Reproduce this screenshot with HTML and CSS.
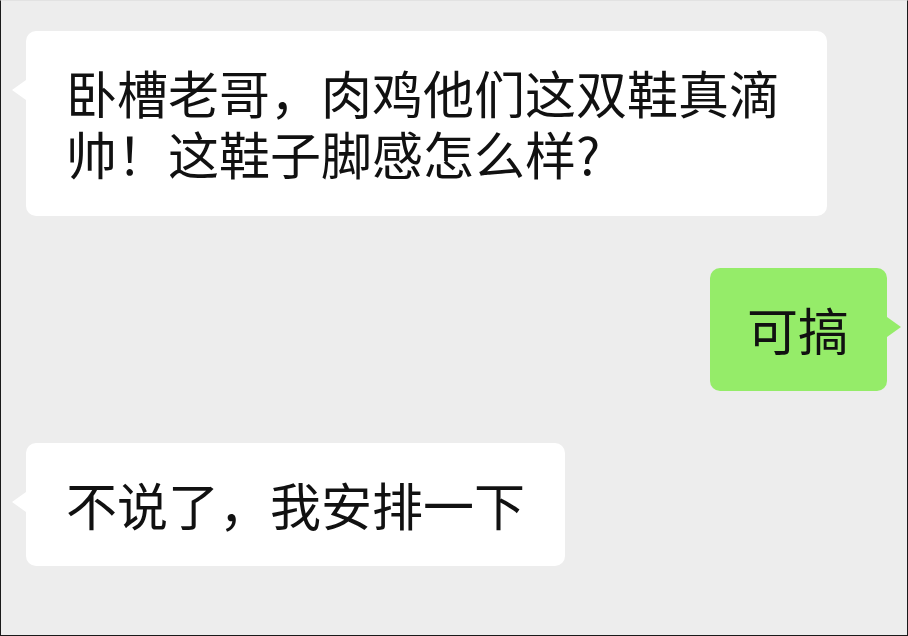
FILE: index.html
```html
<!DOCTYPE html>
<html lang="zh-CN">

<head>
    <meta charset="UTF-8">
    <meta name="viewport" content="width=device-width, initial-scale=1.0">
    <title>聊天记录</title>
    <link rel="stylesheet" href="styles.css">
</head>

<body>
    <div class="chat">
        <div class="row row_left">
            <div class="bubble bubble_left bubble_wide">卧槽老哥，肉鸡他们这双鞋真滴帅！这鞋子脚感怎么样?</div>
        </div>
        <div class="row row_right">
            <div class="bubble bubble_right">可搞</div>
        </div>
        <div class="row row_left">
            <div class="bubble bubble_left">不说了，我安排一下</div>
        </div>
    </div>
</body>

</html>
```

FILE: styles.css
```css
* {
    margin: 0;
    padding: 0;
    box-sizing: border-box;
}

body {
    width: 908px;
    height: 636px;
    background-color: #ededed;
    font-family: "Noto Sans CJK SC", "Noto Sans", sans-serif;
    overflow: hidden;
}

.chat {
    width: 908px;
    height: 636px;
    border-left: 1px solid #1a1a1a;
    border-right: 1px solid #1a1a1a;
    border-bottom: 1px solid #1a1a1a;
    border-top: 1px solid #e2e2e2;
    padding: 30px 20px 0 25px;
    display: flex;
    flex-direction: column;
    gap: 52px;
}

.row {
    display: flex;
}

.row_left {
    justify-content: flex-start;
}

.row_right {
    justify-content: flex-end;
}

.bubble {
    position: relative;
    font-size: 51px;
    line-height: 61px;
    color: #111;
    padding: 31px 40px;
    border-radius: 10px;
}

.bubble_wide {
    width: 801px;
    padding-bottom: 32px;
}

.bubble_left {
    background-color: #ffffff;
}

.bubble_right {
    background-color: #95ec69;
    padding: 31px 38px 31px 37px;
}

.bubble::before {
    content: "";
    position: absolute;
    top: 49px;
    width: 0;
    height: 0;
    border-top: 10px solid transparent;
    border-bottom: 10px solid transparent;
}

.bubble_left::before {
    left: -14px;
    border-right: 14px solid #ffffff;
}

.bubble_right::before {
    right: -14px;
    border-left: 14px solid #95ec69;
}
```
